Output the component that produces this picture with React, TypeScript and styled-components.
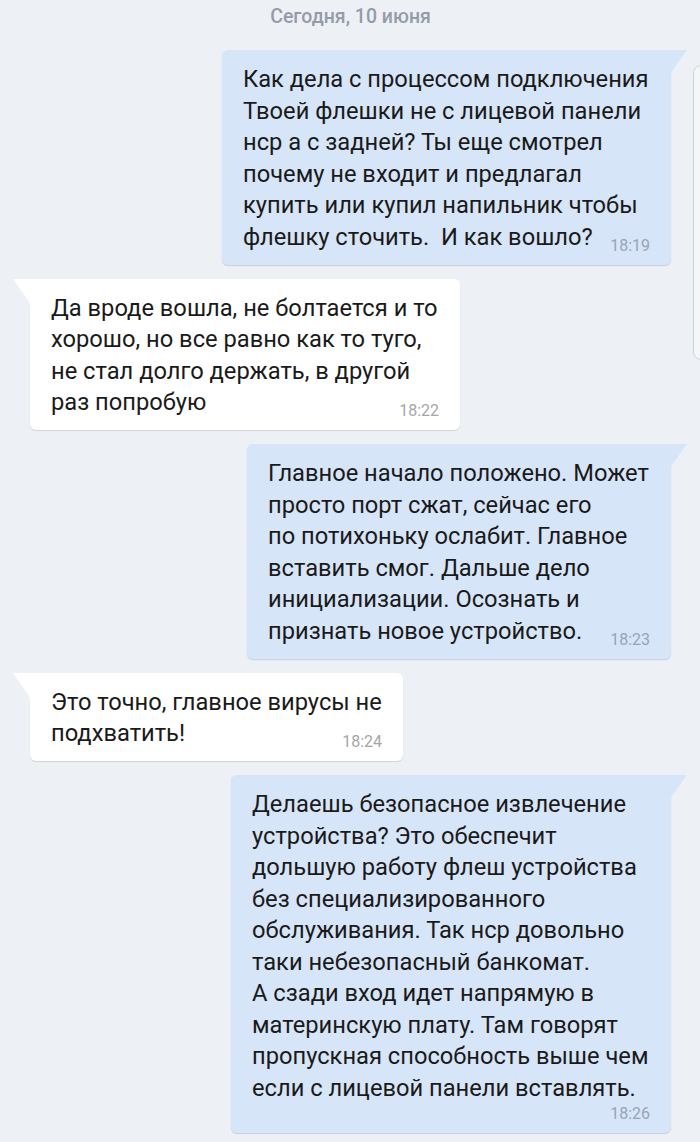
import React from 'react';
import styled, { createGlobalStyle } from 'styled-components';

type Message = {
  id: number;
  out: boolean;
  width: number;
  time: string;
  timeBelow?: boolean;
  lines: string[];
};

const messages: Message[] = [
  {
    id: 1,
    out: true,
    width: 449,
    time: '18:19',
    lines: [
      'Как дела с процессом подключения',
      'Твоей флешки не с лицевой панели',
      'нср а с задней? Ты еще смотрел',
      'почему не входит и предлагал',
      'купить или купил напильник чтобы',
      'флешку сточить.  И как вошло?',
    ],
  },
  {
    id: 2,
    out: false,
    width: 430,
    time: '18:22',
    lines: [
      'Да вроде вошла, не болтается и то',
      'хорошо, но все равно как то туго,',
      'не стал долго держать, в другой',
      'раз попробую',
    ],
  },
  {
    id: 3,
    out: true,
    width: 424,
    time: '18:23',
    lines: [
      'Главное начало положено. Может',
      'просто порт сжат, сейчас его',
      'по потихоньку ослабит. Главное',
      'вставить смог. Дальше дело',
      'инициализации. Осознать и',
      'признать новое устройство.',
    ],
  },
  {
    id: 4,
    out: false,
    width: 373,
    time: '18:24',
    lines: ['Это точно, главное вирусы не', 'подхватить!'],
  },
  {
    id: 5,
    out: true,
    width: 440,
    time: '18:26',
    timeBelow: true,
    lines: [
      'Делаешь безопасное извлечение',
      'устройства? Это обеспечит',
      'дольшую работу флеш устройства',
      'без специализированного',
      'обслуживания. Так нср довольно',
      'таки небезопасный банкомат.',
      'А сзади вход идет напрямую в',
      'материнскую плату. Там говорят',
      'пропускная способность выше чем',
      'если с лицевой панели вставлять.',
    ],
  },
];

const GlobalStyle = createGlobalStyle`
  html, body {
    margin: 0;
    padding: 0;
    background: #edf0f5;
  }
  body {
    font-family: Roboto, "Noto Sans", "Liberation Sans", sans-serif;
    -webkit-font-smoothing: antialiased;
  }
`;

const Page = styled.div`
  min-height: 1142px;
  box-sizing: border-box;
  padding: 0 29px 20px 30px;
  display: flex;
  flex-direction: column;
  overflow: hidden;
`;

const DateLabel = styled.div`
  height: 34px;
  line-height: 34px;
  margin-bottom: 16px;
  text-align: center;
  font-size: 19.5px;
  font-weight: 500;
  color: #959ba7;
`;

const Feed = styled.div`
  display: flex;
  flex-direction: column;
  gap: 14px;
`;

const Bubble = styled.div<{ $out: boolean; $width: number }>`
  position: relative;
  display: flow-root;
  align-self: ${(p) => (p.$out ? 'flex-end' : 'flex-start')};
  width: ${(p) => p.$width}px;
  box-sizing: border-box;
  padding: 14px 21px 9px;
  background: ${(p) => (p.$out ? '#d7e5f8' : '#ffffff')};
  border-radius: ${(p) => (p.$out ? '6px 0 6px 6px' : '0 6px 6px 6px')};
  box-shadow: 0 1px 1px ${(p) => (p.$out ? 'rgba(80, 110, 150, 0.25)' : 'rgba(0, 0, 0, 0.12)')};
`;

const Tail = styled.svg<{ $out: boolean }>`
  position: absolute;
  top: 0;
  ${(p) => (p.$out ? 'right: -16px;' : 'left: -17px;')}
  width: 18px;
  height: 30px;
  transform: ${(p) => (p.$out ? 'none' : 'scaleX(-1)')};
`;

const Text = styled.div`
  font-size: 23.7px;
  line-height: 31.5px;
  color: #1a1a1a;
  white-space: pre;
`;

const Time = styled.span<{ $out: boolean; $below?: boolean }>`
  float: right;
  margin-left: 12px;
  margin-top: ${(p) => (p.$below ? 0 : 14)}px;
  font-size: 16px;
  line-height: 20px;
  color: ${(p) => (p.$out ? '#98a4b6' : '#a6a6a6')};
`;

const ScrollThumb = styled.div`
  position: fixed;
  top: 65px;
  right: -9px;
  width: 14px;
  height: 293px;
  border: 1px solid #cdd2d9;
  border-radius: 8px;
  background: #f5f6f8;
`;

const MessageBubble: React.FC<{ message: Message }> = ({ message }) => {
  const fill = message.out ? '#d7e5f8' : '#ffffff';
  return (
    <Bubble $out={message.out} $width={message.width}>
      <Tail $out={message.out} viewBox="0 0 18 30">
        <path d="M0 0 H18 L3 21 Q1 24 1 28 V30 H0 Z" fill={fill} />
      </Tail>
      <Text>
        {message.lines.map((line, i) => (
          <React.Fragment key={i}>
            {i > 0 && <br />}
            {line}
          </React.Fragment>
        ))}
        <Time $out={message.out} $below={message.timeBelow}>
          {message.time}
        </Time>
      </Text>
    </Bubble>
  );
};

const App: React.FC = () => {
  return (
    <>
      <GlobalStyle />
      <Page>
        <DateLabel>Сегодня, 10 июня</DateLabel>
        <Feed>
          {messages.map((m) => (
            <MessageBubble key={m.id} message={m} />
          ))}
        </Feed>
      </Page>
      <ScrollThumb />
    </>
  );
};

export default App;
